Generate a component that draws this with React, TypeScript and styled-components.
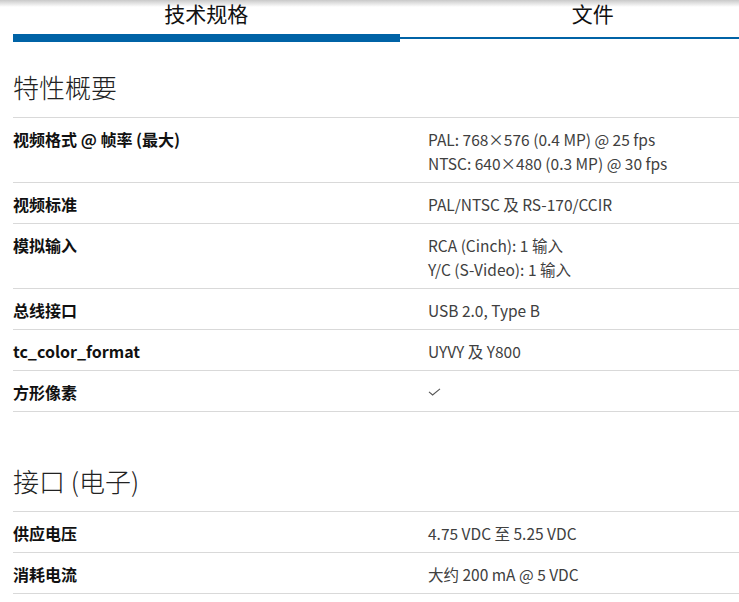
import React from "react";
import styled, { createGlobalStyle } from "styled-components";

const GlobalStyle = createGlobalStyle`
  html, body {
    margin: 0;
    padding: 0;
    background: #fff;
    overflow: hidden;
  }
  body {
    font-family: "Noto Sans CJK SC", "Noto Sans", sans-serif;
    color: #333;
  }
`;

interface SpecRow {
  label: string;
  values: string[];
  check?: boolean;
}

interface SpecSection {
  title: string;
  rows: SpecRow[];
}

const sections: SpecSection[] = [
  {
    title: "特性概要",
    rows: [
      {
        label: "视频格式 @ 帧率 (最大)",
        values: ["PAL: 768×576 (0.4 MP) @ 25 fps", "NTSC: 640×480 (0.3 MP) @ 30 fps"],
      },
      { label: "视频标准", values: ["PAL/NTSC 及 RS-170/CCIR"] },
      { label: "模拟输入", values: ["RCA (Cinch): 1 输入", "Y/C (S-Video): 1 输入"] },
      { label: "总线接口", values: ["USB 2.0, Type B"] },
      { label: "tc_color_format", values: ["UYVY 及 Y800"] },
      { label: "方形像素", values: [], check: true },
    ],
  },
  {
    title: "接口 (电子)",
    rows: [
      { label: "供应电压", values: ["4.75 VDC 至 5.25 VDC"] },
      { label: "消耗电流", values: ["大约 200 mA @ 5 VDC"] },
    ],
  },
];

const Page = styled.div`
  width: 773px;
  padding-left: 13px;
  background: linear-gradient(#c9c9c9 0px, #fff 7px);
`;

const Tabs = styled.div`
  display: flex;
  align-items: flex-start;
  height: 42px;
`;

const Tab = styled.div`
  flex: 1;
  display: flex;
  flex-direction: column;
`;

const TabLabel = styled.div`
  height: 34px;
  line-height: 26px;
  font-size: 21px;
  color: #111;
  text-align: center;
`;

const TabBar = styled.div<{ $active?: boolean }>`
  height: ${({ $active }) => ($active ? 8 : 2)}px;
  margin-top: ${({ $active }) => ($active ? 0 : 3)}px;
  background: #0063a6;
`;

const Section = styled.section`
  & + & {
    margin-top: 24px;
  }
`;

const Heading = styled.h2`
  margin: 0;
  padding: 29px 0 14px;
  font-size: 26px;
  line-height: 32px;
  font-weight: 300;
  color: #222;
`;

const Table = styled.div`
  border-top: 1px solid #d9d9d9;
`;

const Row = styled.div`
  display: grid;
  grid-template-columns: 415px 1fr;
  padding: 9px 0 7px;
  border-bottom: 1px solid #d9d9d9;
  font-size: 16px;
  line-height: 24px;
`;

const Label = styled.div`
  font-weight: 700;
  color: #111;
`;

const Value = styled.div`
  font-size: 15.5px;
  color: #404040;
`;

const Check = styled.svg`
  display: block;
  margin-top: 8px;
  width: 13px;
  height: 8px;
`;

export default function App() {
  return (
    <>
      <GlobalStyle />
      <Page>
        <Tabs>
          <Tab>
            <TabLabel>技术规格</TabLabel>
            <TabBar $active />
          </Tab>
          <Tab>
            <TabLabel>文件</TabLabel>
            <TabBar />
          </Tab>
        </Tabs>
        {sections.map((section) => (
          <Section key={section.title}>
            <Heading>{section.title}</Heading>
            <Table>
              {section.rows.map((row) => (
                <Row key={row.label}>
                  <Label>{row.label}</Label>
                  <Value>
                    {row.values.map((v) => (
                      <div key={v}>{v}</div>
                    ))}
                    {row.check && (
                      <Check viewBox="0 0 13 8">
                        <path d="M1 3.8 L4.6 7 L12 0.8" fill="none" stroke="#555" strokeWidth="1.1" />
                      </Check>
                    )}
                  </Value>
                </Row>
              ))}
            </Table>
          </Section>
        ))}
      </Page>
    </>
  );
}
